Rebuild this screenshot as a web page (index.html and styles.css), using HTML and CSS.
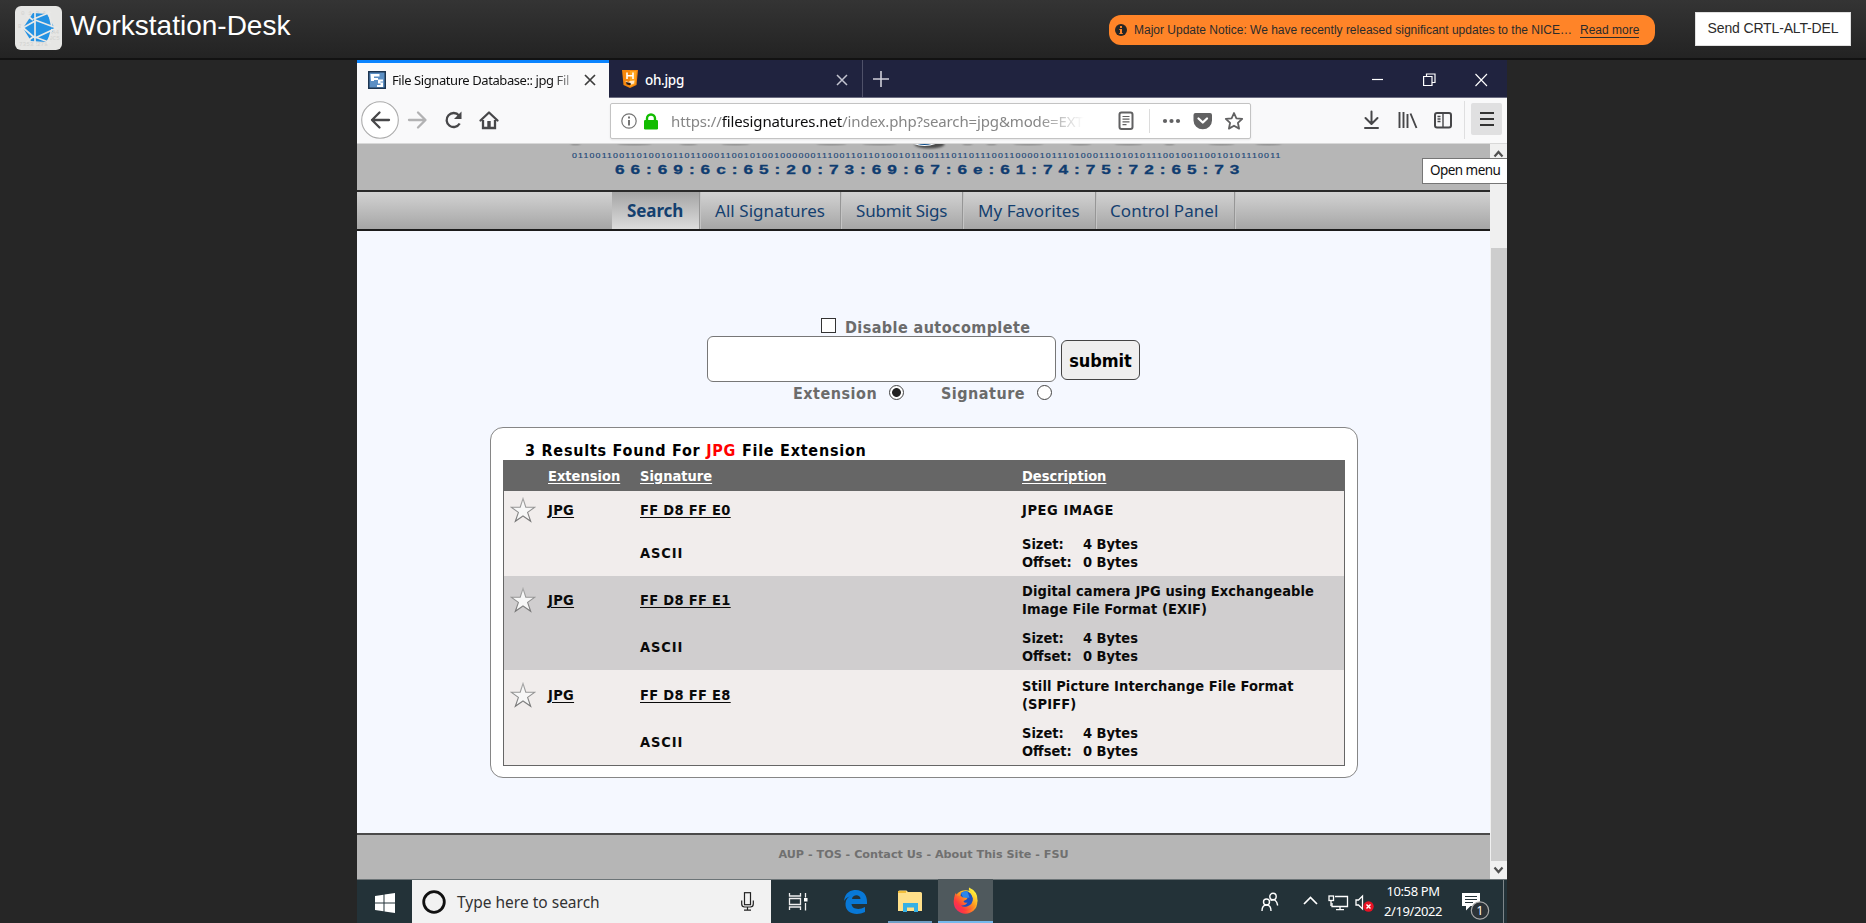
FILE: index.html
```html
<!DOCTYPE html>
<html lang="en">
<head>
<meta charset="utf-8">
<title>Workstation-Desk</title>
<link rel="stylesheet" href="styles.css">
</head>
<body>
<header class="topbar">
  <svg class="logo" width="47" height="44" viewBox="0 0 47 44">
    <rect width="47" height="44" rx="6" fill="#e6e6e4"/>
    <g fill="#d2d2d0" font-family="Liberation Mono" font-size="6"><text x="3" y="22">B</text><text x="37" y="28">A4</text><text x="34" y="34">0C5</text><text x="4" y="40">73532278</text><text x="6" y="9">0 1 2 A</text></g>
    <path d="M18 7L32 8L39.500 22L31 36L16 35L8 22Z" fill="#2492e3"/>
    <path d="M20 4V40M18.500 13L36 6M20 14L41.500 22L20 32M20 15L6 23M6 20L20 32M20 31L36 37M18 14L11 9M18 31L11 36M33.500 5L37 21M37 23L32.500 38" fill="none" stroke="#e9e9e7" stroke-width="1.700"/>
  </svg>
  <h1 class="title">Workstation-Desk</h1>
  <div class="notice">
    <svg width="12" height="12" viewBox="0 0 12 12"><circle cx="6" cy="6" r="6" fill="#262626"/><path d="M5 2h2v2H5zM4.300 5H7v4h.8v1H4.300V9H5V6h-.7z" fill="#ff8428"/></svg>
    <span class="notice-text">Major Update Notice: We have recently released significant updates to the NICE…</span>
    <a class="notice-link">Read more</a>
  </div>
  <button class="send">Send CRTL-ALT-DEL</button>
</header>

<main class="screen">
  <div class="tabs">
    <div class="tab active">
      <svg width="18" height="18" viewBox="0 0 18 18"><rect x=".75" y=".75" width="16.500" height="16.500" fill="#5b8fc4" stroke="#1d3550" stroke-width="1.500"/><path d="M2.500 3h9v2.500H6V7h4v2H6v1H3z" fill="#fff"/><path d="M15 8.500h-5v4h2.500V14H9v2h6v-4.500h-2.500v-1H15z" fill="#fff"/></svg>
      <span class="tab-label fade">File Signature Database:: jpg Fil</span>
      <svg class="tab-close" width="12" height="12" viewBox="0 0 12 12"><path d="M1 1L11 11M11 1L1 11" stroke="#3c3c3c" stroke-width="1.700"/></svg>
    </div>
    <div class="tab second">
      <svg width="16" height="18" viewBox="0 0 16 18"><path d="M0 0h16l-1.500 15L8 18l-6.500-3z" fill="#f5870d"/><path d="M8 1h6.500L13.300 14 8 16.500z" fill="#ffa51f"/><path d="M5 2.500v6.500M5 5.800h6M11 2.500v6.500" fill="none" stroke="#fff" stroke-width="1.600"/><path d="M3.500 11l3 1 1.500-1 4.500-.5-.5 3L8 15l-3.500-1.500z" fill="#ffe6c4"/><path d="M4 12l4.500 1 .5 1.500-1.500.8-3-1z" fill="#2a1a10"/></svg>
      <span class="tab-label">oh.jpg</span>
      <svg class="tab-close" width="12" height="12" viewBox="0 0 12 12"><path d="M1 1L11 11M11 1L1 11" stroke="#c3c4d0" stroke-width="1.500"/></svg>
    </div>
    <svg class="plus" width="16" height="16" viewBox="0 0 16 16"><path d="M8 0V16M0 8H16" stroke="#d0d0da" stroke-width="1.600"/></svg>
    <div class="winctl">
      <svg width="12" height="14" viewBox="0 0 12 14"><path d="M0 6.500H11" stroke="#fff" stroke-width="1.200"/></svg>
      <svg width="13" height="14" viewBox="0 0 13 14"><path d="M.6 3.500h8.400v9H.6zM3.500 3.500V1h8.500v8.500H9" fill="none" stroke="#fff" stroke-width="1.200"/></svg>
      <svg width="13" height="14" viewBox="0 0 13 14"><path d="M.5 1L12 13M12 1L.5 13" stroke="#fff" stroke-width="1.100"/></svg>
    </div>
  </div>

  <div class="toolbar">
    <div class="navbtns">
      <svg width="140" height="38" viewBox="0 0 140 38" fill="none" stroke="#474749" stroke-width="2.300">
        <circle cx="19" cy="19" r="18.300" fill="#fff" stroke="#ababab" stroke-width="1.100"/>
        <path d="M28 19H11M18.500 11.500L11 19L18.500 26.500" stroke-linecap="round" stroke-linejoin="round"/>
        <path d="M48 19H64M57 11.500L64.500 19L57 26.500" stroke="#b2b2b3" stroke-linecap="round" stroke-linejoin="round"/>
        <path d="M98 14.500A7 7 0 1 0 98.700 22.500"/><path d="M100.500 10.500V18H93z" fill="#474749" stroke="none"/>
        <path d="M119.500 19.500L128 11.500L136.500 19.500" stroke-linecap="round" stroke-linejoin="round"/><path d="M122 19v8h12v-8"/><path d="M126.300 20h3.400v7h-3.400z" fill="#474749" stroke="none"/>
      </svg>
    </div>
    <div class="urlbar">
      <svg class="info" width="16" height="16" viewBox="0 0 16 16"><circle cx="8" cy="8" r="7.200" fill="none" stroke="#757575" stroke-width="1.200"/><path d="M7 3.500h2v2H7zM7 7h2v5.500H7z" fill="#757575"/></svg>
      <svg class="lock" width="14" height="17" viewBox="0 0 14 17"><rect y="7" width="14" height="9.500" rx="1.200" fill="#12bc00"/><path d="M3 8V5.500a4 4 0 0 1 8 0V8" fill="none" stroke="#12bc00" stroke-width="2.400"/></svg>
      <span class="url">https://<b>filesignatures.net</b>/index.php?search=jpg&amp;mode=EXT</span>
      <svg class="urlicons" width="126" height="26" viewBox="0 0 126 26" fill="none" stroke="#616162" stroke-width="2">
        <rect x="1.500" y="4.500" width="13" height="16.500" rx="2"/><path d="M4.500 8.500h7M4.500 11.200h7M4.500 13.900h7M4.500 16.600h4" stroke-width="1.200"/>
        <path d="M31.500 1V25" stroke="#dcdcdc" stroke-width="1"/>
        <g fill="#616162" stroke="none"><circle cx="47" cy="13" r="2.100"/><circle cx="53.500" cy="13" r="2.100"/><circle cx="60" cy="13" r="2.100"/>
        <path d="M77.500 5h14.500a2 2 0 0 1 2 2v5.500a9 8.500 0 0 1-18.500 0V7a2 2 0 0 1 2-2z"/></g>
        <path d="M80.500 10.500L84.800 14.500L89 10.500" stroke="#fff" stroke-width="2.300" stroke-linecap="round" stroke-linejoin="round"/>
        <path d="M116 5l2.400 5.300 5.800.6-4.300 3.900 1.200 5.800-5.100-2.900-5.100 2.900 1.200-5.800-4.300-3.900 5.800-.6z" stroke-width="1.800" stroke-linejoin="round"/>
      </svg>
    </div>
    <div class="tools">
      <svg width="92" height="38" viewBox="0 0 92 38" fill="none" stroke="#474749" stroke-width="2">
        <path d="M8.500 10.500V22M2.500 17L8.500 23L14.500 17M2 27H15" stroke-linecap="round" stroke-linejoin="round"/>
        <path d="M36.500 11v16M40.500 11v16M44.500 13v14M47.500 12.500L53.500 27" stroke-width="1.900"/>
        <rect x="72" y="12" width="16" height="14.500" rx="2"/><path d="M80 12v14M74.500 15.500h3M74.500 18h3M74.500 20.500h3" stroke-width="1.400"/>
      </svg>
      <div class="menu-slot"><div class="menu-btn"><i></i><i></i><i></i></div></div>
    </div>
  </div>

  <div class="view">
    <div class="page">
      <svg class="banner" width="1132" height="46" viewBox="0 0 1132 46">
        <defs><filter id="soft"><feGaussianBlur stdDeviation="1.100"/></filter></defs>
        <g fill="#8f8f8f" filter="url(#soft)"><ellipse cx="218" cy="-1" rx="5" ry="2.500"/><ellipse cx="277" cy="-1" rx="17" ry="2.500"/><ellipse cx="331" cy="-1" rx="9" ry="2.500"/><ellipse cx="378" cy="-1" rx="14" ry="2.500"/><ellipse cx="474" cy="-1" rx="15" ry="2.500"/><ellipse cx="522" cy="-1" rx="17" ry="2.500"/><ellipse cx="610" cy="-1" rx="5" ry="2.500"/><ellipse cx="634" cy="-1" rx="5" ry="2.500"/><ellipse cx="671" cy="-1" rx="15" ry="2.500"/><ellipse cx="723" cy="-1" rx="11" ry="2.500"/><ellipse cx="771" cy="-1" rx="14" ry="2.500"/><ellipse cx="812" cy="-1" rx="5" ry="2.500"/><ellipse cx="864" cy="-1" rx="13" ry="2.500"/><ellipse cx="911" cy="-1" rx="13" ry="2.500"/></g>
        <ellipse cx="572" cy="0" rx="15" ry="4.500" fill="#4b4b4b" filter="url(#soft)"/>
        <path d="M555 -1Q567 4 579 -1z" fill="#0b4a87" stroke="#fff" stroke-width="1.200"/>
        <g transform="translate(214.500 13.500) scale(1.300 1)"><text class="bits" x="0" y="0" textLength="545">011001100110100101101100011001010010000001110011011010010110011101101110011000010111010001110101011100100110010101110011</text></g>
        <g transform="translate(257.500 30) scale(1.350 1)"><text class="hex" x="0" y="0" textLength="462.500">66:69:6c:65:20:73:69:67:6e:61:74:75:72:65:73</text></g>
      </svg>
      <nav class="menu">
        <a class="m1 on"><span>Search</span></a><a class="m2"><span>All Signatures</span></a><a class="m3"><span>Submit Sigs</span></a><a class="m4"><span>My Favorites</span></a><a class="m5"><span>Control Panel</span></a>
      </nav>
      <section class="content">
        <div class="form">
          <label class="auto"><i class="check"></i><span>Disable autocomplete</span></label>
          <div class="query"><div class="field"></div><button class="submit">submit</button></div>
          <div class="modes"><span class="ext">Extension</span><i class="radio sel"></i><span class="sig">Signature</span><i class="radio"></i></div>
        </div>
        <div class="results">
          <h2 class="found">3 Results Found For <em>JPG</em> File Extension</h2>
          <div class="table">
            <div class="row head"><span></span><u>Extension</u><u>Signature</u><u>Description</u></div>
            <div class="rec r1">
              <svg class="star" width="26" height="26" viewBox="0 0 26 26"><use href="#star"/></svg><u>JPG</u><u>FF D8 FF E0</u><p class="caps">JPEG IMAGE</p>
              <span class="ascii">ASCII</span><div class="meta"><span>Sizet:</span><span>4 Bytes</span><span>Offset:</span><span>0 Bytes</span></div>
            </div>
            <div class="rec r2">
              <svg class="star" width="26" height="26" viewBox="0 0 26 26"><use href="#star"/></svg><u>JPG</u><u>FF D8 FF E1</u><p>Digital camera JPG using Exchangeable<br>Image File Format (EXIF)</p>
              <span class="ascii">ASCII</span><div class="meta"><span>Sizet:</span><span>4 Bytes</span><span>Offset:</span><span>0 Bytes</span></div>
            </div>
            <div class="rec r3">
              <svg class="star" width="26" height="26" viewBox="0 0 26 26"><defs><linearGradient id="sg" x2="0" y2="1"><stop offset="0" stop-color="#aaa"/><stop offset="1" stop-color="#777"/></linearGradient><path id="star" d="M13 1.500L15.800 10.200H24.800L17.600 15.400L20.700 24.300L13 19L5.300 24.300L8.400 15.400L1.200 10.200H10.200Z" fill="#f7f7f7" stroke="url(#sg)" stroke-width="1.100"/></defs><use href="#star"/></svg><u>JPG</u><u>FF D8 FF E8</u><p>Still Picture Interchange File Format<br>(SPIFF)</p>
              <span class="ascii">ASCII</span><div class="meta"><span>Sizet:</span><span>4 Bytes</span><span>Offset:</span><span>0 Bytes</span></div>
            </div>
          </div>
        </div>
      </section>
      <footer class="foot"><span>AUP - TOS - Contact Us - About This Site - FSU</span></footer>
    </div>
    <div class="scroll">
      <svg width="17" height="17" viewBox="0 0 17 17"><path d="M4.500 12.500L8.500 8L12.500 12.500" fill="none" stroke="#505050" stroke-width="2.200"/></svg>
      <div class="thumb"></div>
      <svg width="17" height="18" viewBox="0 0 17 18"><path d="M4.500 6.500L8.500 11L12.500 6.500" fill="none" stroke="#505050" stroke-width="2.200"/></svg>
    </div>
    <div class="tip">Open menu</div>
  </div>

  <div class="taskbar">
    <div class="start"><svg width="20" height="20" viewBox="0 0 20 20" fill="#fff"><path d="M0 3l8.500-1.200v7.700H0zM9.500 1.600L20 0v9.500H9.500zM0 10.500h8.500v7.700L0 17zM9.500 10.500H20V20L9.500 18.400z"/></svg></div>
    <div class="search">
      <svg width="24" height="24" viewBox="0 0 24 24"><circle cx="12" cy="12" r="10.300" fill="none" stroke="#111" stroke-width="2.800"/></svg>
      <span>Type here to search</span>
      <svg class="mic" width="13" height="19" viewBox="0 0 13 19" fill="none" stroke="#222" stroke-width="1.200"><rect x="3.500" y=".7" width="6" height="12" /><path d="M.7 8.500V12q0 3 3 3h5.600q3 0 3-3V8.500M6.500 15v3M3 18.200h7"/></svg>
    </div>
    <svg class="apps" width="222" height="44" viewBox="0 0 222 44">
      <defs>
        <linearGradient id="ff" x1="1" y1="0" x2="0" y2="1"><stop offset=".15" stop-color="#fff23a"/><stop offset=".45" stop-color="#ff9a1f"/><stop offset=".75" stop-color="#ff3a3d"/><stop offset="1" stop-color="#e8148a"/></linearGradient>
      </defs>
      <rect x="167" y="0" width="55" height="44" fill="#4f595d"/>
      <rect x="117" y="42" width="44" height="2" fill="#6f9fc6"/><rect x="167" y="42" width="55" height="2" fill="#76b9ed"/>
      <g fill="none" stroke="#eee" stroke-width="1.300"><path d="M18.500 14v3h11v-3M18.500 31v-3h11v3M18.500 19.500h11v6h-11zM34.500 14v4.500M34.500 24v7.500"/></g><rect x="33" y="19" width="3.500" height="3.500" fill="#fff"/>
      <path d="M73 22C74 13 80 11 85 11c7 0 11 5 11 11.500V25H80.500c.3 5 7.500 6.500 13.500 3v5c-8 4-20 2-19.500-8.500.2-4 2.500-6 4.500-7.200-3 1-5 3-6 4.700zM81 20h8.500c0-5-8-5-8.500 0z" fill="#0878d7"/>
      <path d="M127 13q0-1.500 1.500-1.500h7l1.500 1.500h12.500q1.500 0 1.500 1.500V32h-24z" fill="#ffe08a"/><path d="M127 12h8v2h-8z" fill="#f3bf3b"/><path d="M132 33v-9h15v9h-4v-4.500h-7V33z" fill="#36b0e4"/>
      <circle cx="194.500" cy="23" r="11.800" fill="url(#ff)"/>
      <path d="M190 14q3-2.500 7-1.500 5 3 5 9 0 8-8 8-4 0-6-3.500z" fill="#1b4fc0"/><path d="M190 14q3-2.500 6.500-1.500l2 6-6 1z" fill="#2c86ea"/>
      <path d="M185 14.500l1.500 2.500q3-1 5.500 1.500l4.500.5q-.5 2-4 3 0 2.500 4 1.500-2 3.500-6.500 3 2 2 6 1 6-2 6-8 0-4.500-3.500-7.500-1-1.500-.5-3.500 9 4 8.500 13-1 10-12 10.500-11-1-11.500-11 .5-6 2-7z" fill="url(#ff)"/>
    </svg>
    <div class="tray">
      <svg width="40" height="22" viewBox="0 0 40 22" fill="none" stroke="#fff" stroke-width="1.400" class="peeps">
        <circle cx="5.500" cy="10" r="3"/><path d="M1 19q0-6 4.500-6t4.500 6"/><circle cx="12" cy="4.500" r="3.200"/><path d="M9.500 8.500q5.700-3 7.200 5"/>
      </svg>
      <svg class="sys" width="72" height="22" viewBox="0 0 72 22" fill="none" stroke="#fff" stroke-width="1.300">
        <path d="M1 13L7.500 6.500L14 13" stroke-width="1.700"/>
        <path d="M32 5.500h12.500v10H29V12M37 15.500v3M33 18.600h8"/><rect x="26" y="5" width="4.500" height="4.500"/><path d="M28 9.500V15"/>
        <path d="M53 9h2.500l4-4v13l-4-4H53z"/><circle cx="65.500" cy="15.500" r="5.200" fill="#e81123" stroke="none"/><path d="M63.500 13.500l4 4M67.500 13.500l-4 4" stroke-width="1.400"/>
      </svg>
      <div class="clock"><span>10:58 PM</span><span class="date">2/19/2022</span></div>
      <svg class="note" width="30" height="30" viewBox="0 0 30 30"><path d="M1 3h18v13h-9.500L5 20.500V16H1z" fill="#fff"/><path d="M4 6.500h12M4 9.500h12M4 12.500h8" stroke="#233238" stroke-width="1.200"/><circle cx="19" cy="20.500" r="8.700" fill="#2c3338" stroke="#aaa" stroke-width="1.200"/><text x="19" y="25" text-anchor="middle" class="badge">1</text></svg>
      <i class="peek"></i>
    </div>
  </div>
</main>
</body>
</html>
```
FILE: styles.css
```css
* { box-sizing: border-box; }
body { margin: 0; height: 923px; overflow: hidden; background: #262626; font-family: "Liberation Sans", Arial, sans-serif; display: flex; flex-direction: column; }
svg { display: block; flex: none; }
i, em { font-style: normal; }
button { padding: 0; margin: 0; }
span, a, u, p, h1, h2, button { white-space: nowrap; }

.topbar { height: 60px; flex: none; display: flex; align-items: flex-start; padding: 6px 15px 0; background: linear-gradient(#343434, #232323); border-bottom: 2px solid #121212; }
.title { margin: 3px 0 0 8px; font-size: 28px; line-height: 34px; font-weight: 400; color: #fff; }
.notice { margin: 9px 40px 0 auto; width: 546px; height: 30px; border-radius: 12px; background: #ff8428; display: flex; align-items: center; padding-left: 6px; font-size: 12px; color: #2b2b2b; }
.notice-text { width: 446px; padding-left: 7px; margin-right: 7px; line-height: 28px; padding-bottom: 1px; }
.notice-link { border-bottom: 1px solid #2b2b2b; line-height: 13px; margin-top: 1px; }
.send { margin-top: 6px; width: 156px; height: 34px; border: 1px solid #e0e0e0; background: #fff; color: #2b2b2b; font: 14px "Liberation Sans", Arial, sans-serif; letter-spacing: -.15px; padding-bottom: 2px; }

.screen { width: 1150px; height: 863px; margin-left: 357px; display: flex; flex-direction: column; background: #fff; font-family: "Noto Sans", "Open Sans", sans-serif; }

.tabs { height: 38px; flex: none; display: flex; background: #20233f; border-bottom: 1px solid #6b6c80; }
.tab { display: flex; align-items: center; height: 38px; }
.active { width: 252px; background: #f9f9fa; border-top: 3px solid #0a84ff; padding: 0 0 2px 11px; }
.active .tab-close { margin-left: 6px; }
.tab-label { font-size: 13.500px; letter-spacing: -.3px; color: #111; }
.active .tab-label { width: 186px; margin-left: 6px; font-size: 13px; letter-spacing: -.42px; }
.fade { -webkit-mask-image: linear-gradient(90deg, #000 86%, transparent 102%); mask-image: linear-gradient(90deg, #000 86%, transparent 102%); }
.second { width: 254px; height: 37px; padding: 1px 0 0 13px; border-right: 1px solid #4f5169; }
.second .tab-label { color: #fff; margin: 2px auto 0 7px; font-weight: 500; }
.second .tab-close { margin: 1px 14px 0 0; }
.plus { margin: 11px 0 0 10px; }
.winctl { display: flex; gap: 39px; margin: 13px 19px 0 auto; }

.toolbar { height: 45px; flex: none; display: flex; background: #f9f9fa; padding-top: 3px; padding-left: 4px; }
.navbtns { width: 249px; }
.urlbar { width: 641px; height: 36px; margin-top: 2px; border: 1px solid #c3c3c3; border-radius: 2px; background: #fff; display: flex; align-items: center; box-shadow: 0 1px 2px rgba(0,0,0,.08); padding-left: 10px; }
.lock { margin-left: 7px; }
.url { margin-left: 13px; font-size: 15px; line-height: 20px; letter-spacing: -.13px; color: #868686; width: 417px; -webkit-mask-image: linear-gradient(90deg, #000 88%, transparent 99%); mask-image: linear-gradient(90deg, #000 88%, transparent 99%); }
.url b { font-weight: 400; color: #0c0c0d; }
.urlicons { margin-left: 30px; }
.tools { display: flex; margin-left: 112px; }
.menu-slot { margin-left: 9px; border-left: 1px solid #dfdfe0; padding: 2px 0 0 6px; height: 38px; }
.menu-btn { width: 31px; height: 32px; background: #e0e0e1; border-radius: 2px; display: flex; flex-direction: column; align-items: center; justify-content: center; gap: 4px; }
.menu-btn i { width: 14px; height: 2px; background: #333; }

.view { height: 736px; flex: none; display: flex; position: relative; border-top: 1px solid #d8d8d8; }
.page { width: 1133px; display: flex; flex-direction: column; background: #f5f8ff; }
.banner { background: #b6b6b6; height: 46px; width: 1133px; overflow: hidden; }
.bits { font: 6.800px "Liberation Sans", sans-serif; fill: #1d4878; stroke: #1d4878; stroke-width: .15px; }
.hex { font: bold 12.800px "Liberation Sans", sans-serif; fill: #0f3c70; stroke: #0f3c70; stroke-width: .3px; }
.menu { height: 41px; flex: none; display: flex; padding-left: 255px; border-top: 2px solid #2a2a2a; border-bottom: 2px solid #1c1c1c; background: linear-gradient(#d2d2d2, #a6a6a6); }
.menu a { display: flex; align-items: center; padding-left: 15px; border-right: 1px solid #969696; box-shadow: 1px 0 #c4c4c4; color: #14406f; font-size: 17px; line-height: 35px; letter-spacing: .05px; }
.m1 { width: 88px; } .m2 { width: 141px; } .m3 { width: 122px; } .m4 { width: 133px; } .m5 { width: 139px; }
.menu .m3 { letter-spacing: -.2px; }
.menu .m5 { padding-left: 14px; }
.menu .on { font-weight: 700; background: linear-gradient(#a5a5a5, #dcdcdc); letter-spacing: -.1px; }
.content { height: 602px; flex: none; font-family: "DejaVu Sans Condensed", "DejaVu Sans", Verdana, sans-serif; font-stretch: condensed; font-weight: 700; padding-left: 133px; }
.form { height: 196px; padding-top: 86px; color: #6b6b6b; font-size: 16px; letter-spacing: .42px; }
.auto { display: flex; height: 19px; margin-left: 331px; align-items: center; gap: 9px; }
.auto span { margin-top: 1px; }
.check { width: 15px; height: 15px; border: 1px solid #333; background: #fff; margin-bottom: 3px; }
.query { display: flex; margin-left: 217px; align-items: flex-end; }
.field { width: 349px; height: 46px; border: 1px solid #777; border-radius: 6px; background: #fff; }
.submit { margin: 0 0 2px 5px; width: 79px; height: 40px; border: 1px solid #444; border-radius: 6px; background: #efefef; color: #000; font: bold 18px "DejaVu Sans Condensed", "DejaVu Sans", sans-serif; font-stretch: condensed; letter-spacing: -.1px; padding-top: 1px; }
.modes { display: flex; align-items: center; height: 21px; margin-left: 303px; }
.modes span { width: 84px; margin-top: 2px; letter-spacing: .5px; }
.radio { width: 15px; height: 15px; border-radius: 50%; border: 1px solid #444; background: #fff; margin: 0 37px 0 12px; }
.sel { background: radial-gradient(circle, #222 4px, #fff 4.800px); }
.results { width: 868px; height: 351px; border: 1px solid #868686; border-radius: 13px; background: #fff; padding: 11px 12px; }
.found { margin: 0 0 0 22px; font-size: 16px; letter-spacing: .75px; line-height: 23px; height: 21px; color: #000; }
.found em { color: #f00; }
.table { border: 1px solid #666; font-size: 14.500px; line-height: 18px; color: #0a0a0a; height: 306px; }
.head, .rec { display: grid; grid-template-columns: 44px 92px 382px 1fr; align-items: center; }
.head { height: 30px; background: #666; color: #fff; }
.rec { background: #f1edec; }
.r1 { grid-template-rows: 39px 46px; } .r2 { grid-template-rows: 48px 46px; background: #d0cecf; } .r3 { grid-template-rows: 49px 46px; }
.r1 > u, .r1 > p, .r1 > svg { position: relative; top: -1px; }
.rec u, .caps { letter-spacing: .32px; }
.rec p { margin: 0; letter-spacing: .1px; }
.rec p.caps { letter-spacing: .6px; }
.star { margin-left: 6px; }
.ascii { grid-column: 3; letter-spacing: .9px; }
.meta { display: grid; grid-template-columns: 61px 1fr; }
u { text-underline-offset: 2px; text-decoration-thickness: 1px; }
.foot { height: 47px; border-top: 2px solid #4a4a4a; background: #b6b6b6; display: flex; justify-content: center; color: #707070; font: bold 11.200px "DejaVu Sans", Verdana, sans-serif; line-height: 40px; }
.scroll { width: 17px; background: #f0f0f0; display: flex; flex-direction: column; align-items: center; }
.thumb { margin: 87px 0 auto; width: 16px; height: 613px; background: #cdcdcd; }
.tip { position: absolute; right: 0; top: 14px; width: 85px; height: 26px; border: 1px solid #767676; border-right: 0; background: #fff; font-size: 13.500px; line-height: 23px; letter-spacing: -.55px; padding-left: 7px; color: #111; }

.taskbar { height: 44px; flex: none; display: flex; background: #233238; border-top: 1px solid #6c7477; }
.start { width: 55px; flex: none; padding: 13px 0 0 18px; }
.search { width: 359px; flex: none; background: #f2f2f2; display: flex; align-items: center; padding-left: 10px; color: #333; font-size: 15.500px; }
.search span { margin: 1px auto 0 11px; }
.mic { margin-right: 17px; }
.apps { margin-top: -1px; }
.tray { flex: 1; display: flex; color: #fff; padding-left: 268px; }
.peeps { margin-top: 12px; }
.sys { margin: 11px 0 0 2px; }
.clock { width: 74px; margin-left: 1px; flex: none; font-size: 13px; letter-spacing: -.4px; display: flex; flex-direction: column; align-items: center; line-height: 20px; padding-top: 1px; }
.note { margin: 10px 0 0 11px; }
.badge { font: 12px "Noto Sans", sans-serif; fill: #fff; }
.peek { width: 1px; background: #7d8589; margin-left: 12px; }
```
